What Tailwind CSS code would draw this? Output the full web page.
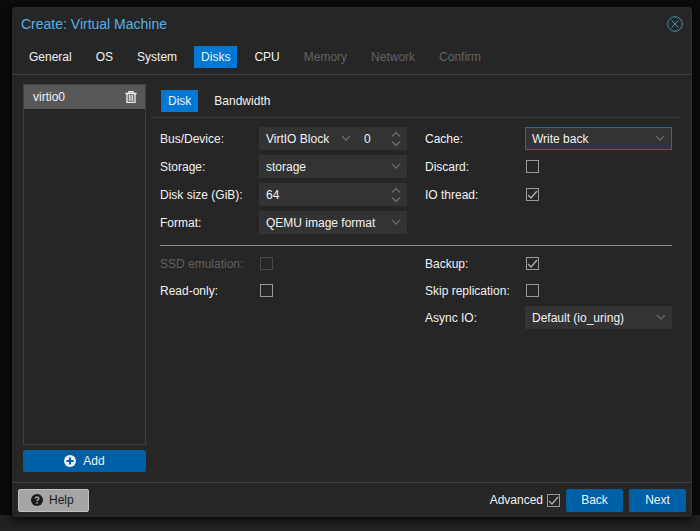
<!DOCTYPE html>
<html lang="en">
<head>
    <meta charset="UTF-8">
    <meta name="viewport" content="width=device-width, initial-scale=1.0">
    <title>Create: Virtual Machine</title>
    <script src="https://cdn.jsdelivr.net/npm/@tailwindcss/browser@4"></script>
</head>
<body class="flex flex-col min-h-screen bg-[#0b0b0b] bg-[linear-gradient(to_top,#222_16px,#0b0b0b_16px)] pt-[7px] pl-3 pr-2 pb-[14px] font-['Liberation_Sans',Arial,sans-serif] text-xs text-[#f2f2f2]">
    <!-- Shared icons -->
    <svg class="hidden">
        <symbol id="chevron" viewBox="0 0 10 6"><path d="M1 1l4 4 4-4" fill="none" stroke="currentColor" stroke-width="1.3"/></symbol>
        <symbol id="spin" viewBox="0 0 10 16"><path d="M1 5.500l4-4 4 4M1 10.500l4 4 4-4" fill="none" stroke="currentColor" stroke-width="1.3"/></symbol>
        <symbol id="check" viewBox="0 0 13 13"><path d="M2 7l3 3 6-7" fill="none" stroke="currentColor" stroke-width="1.3"/></symbol>
    </svg>

    <div class="flex flex-col flex-1 bg-[#262626] rounded-sm border-r border-[#303030] shadow-[0_2px_10px_#000]">
        <!-- Title bar -->
        <header class="flex items-center justify-between h-[34px] pl-[9px] pr-2">
            <h1 class="text-sm text-[#55b0e8]">Create: Virtual Machine</h1>
            <button aria-label="Close" class="text-[#3892b8]">
                <svg class="size-4" viewBox="0 0 16 16" fill="none" stroke="currentColor"><circle cx="8" cy="8" r="7.3"/><path d="M4.500 4.500l7 7M11.500 4.500l-7 7"/></svg>
            </button>
        </header>

        <!-- Wizard steps -->
        <nav class="flex items-center gap-[10px] h-[34px] pl-[10px] pb-px border-b border-[#404040]">
            <button class="h-[22px] px-[7px]">General</button>
            <button class="h-[22px] px-[7px]">OS</button>
            <button class="h-[22px] px-[7px]">System</button>
            <button class="h-[22px] px-[7px] bg-[#0078d4]">Disks</button>
            <button class="h-[22px] px-[7px]">CPU</button>
            <button class="h-[22px] px-[7px] text-[#626262]" disabled>Memory</button>
            <button class="h-[22px] px-[7px] text-[#626262]" disabled>Network</button>
            <button class="h-[22px] px-[7px] text-[#626262]" disabled>Confirm</button>
        </nav>

        <main class="flex flex-1 gap-1 pt-[9px] pr-[9px] pb-[10px] pl-[11px]">
            <!-- Disk list -->
            <aside class="flex flex-col gap-[5px] w-[123px]">
                <ul class="flex-1 border border-[#404040]">
                    <li class="flex items-center justify-between h-6 pl-[9px] pr-2 bg-[#585858]">
                        virtio0
                        <button aria-label="Remove virtio0">
                            <svg class="size-3" viewBox="0 0 12 12"><path d="M.5 2.500h11M4 2.500V.7h4v1.800M2 3v8.400h8V3" fill="none" stroke="currentColor" stroke-width="1.300"/><path d="M4.300 4v6M6 4v6M7.700 4v6" stroke="currentColor"/></svg>
                        </button>
                    </li>
                </ul>
                <button class="flex items-center justify-center gap-[7px] h-[22px] rounded-xs bg-[#0060a6]">
                    <svg class="size-3" viewBox="0 0 12 12"><circle cx="6" cy="6" r="6" fill="currentColor"/><path d="M6 2.500v7M2.500 6h7" stroke="#0060a6" stroke-width="2"/></svg>
                    Add
                </button>
            </aside>

            <section class="flex-1">
                <div class="flex items-start gap-[9px] h-[34px] pt-[6px] pl-[11px] border-b border-[#383838]">
                    <button class="h-[22px] px-[7px] bg-[#0078d4]">Disk</button>
                    <button class="h-[22px] px-[7px]">Bandwidth</button>
                </div>

                <form class="pt-[9px] px-[10px]">
                    <div class="grid grid-cols-2 gap-x-[18px]">
                        <div class="flex flex-col gap-[5px]">
                            <div class="flex items-center h-[23px]">
                                <label for="bus" class="w-[99px] shrink-0">Bus/Device:</label>
                                <div class="flex flex-1 min-w-0 items-center bg-[#333] h-full">
                                    <div class="relative w-[98px]">
                                        <select id="bus" class="appearance-none block w-[71px] h-[23px] pl-[7px] overflow-hidden text-clip outline-none"><option>VirtIO Block</option></select>
                                        <svg class="absolute right-[6px] top-2 w-[10px] h-[6px] text-[#6a6a6a] pointer-events-none"><use href="#chevron"/></svg>
                                    </div>
                                    <input type="text" aria-label="Device" value="0" class="flex-1 min-w-0 h-full pl-[7px] outline-none">
                                    <svg class="w-[10px] h-4 mr-[6px] text-[#6a6a6a]"><use href="#spin"/></svg>
                                </div>
                            </div>
                            <div class="flex items-center h-[23px]">
                                <label for="storage" class="w-[99px] shrink-0">Storage:</label>
                                <div class="relative flex-1 bg-[#333]">
                                    <select id="storage" class="appearance-none block w-full h-[23px] pl-[7px] outline-none"><option>storage</option></select>
                                    <svg class="absolute right-[6px] top-2 w-[10px] h-[6px] text-[#6a6a6a] pointer-events-none"><use href="#chevron"/></svg>
                                </div>
                            </div>
                            <div class="flex items-center h-[23px]">
                                <label for="size" class="w-[99px] shrink-0">Disk size (GiB):</label>
                                <div class="flex flex-1 min-w-0 items-center bg-[#333] h-full">
                                    <input id="size" type="text" value="64" class="flex-1 min-w-0 h-full pl-[7px] outline-none">
                                    <svg class="w-[10px] h-4 mr-[6px] text-[#6a6a6a]"><use href="#spin"/></svg>
                                </div>
                            </div>
                            <div class="flex items-center h-[23px]">
                                <label for="format" class="w-[99px] shrink-0">Format:</label>
                                <div class="relative flex-1 bg-[#333]">
                                    <select id="format" class="appearance-none block w-full h-[23px] pl-[7px] outline-none"><option>QEMU image format</option></select>
                                    <svg class="absolute right-[6px] top-2 w-[10px] h-[6px] text-[#6a6a6a] pointer-events-none"><use href="#chevron"/></svg>
                                </div>
                            </div>
                        </div>

                        <div class="flex flex-col gap-[5px]">
                            <div class="flex items-center h-[23px]">
                                <label for="cache" class="w-[100px] shrink-0">Cache:</label>
                                <div class="relative flex-1 bg-[#333] border border-[#1b6ca5]">
                                    <select id="cache" class="appearance-none block w-full h-[21px] pl-[6px] outline-none"><option>Write back</option></select>
                                    <svg class="absolute right-[6px] top-[7px] w-[10px] h-[6px] text-[#6a6a6a] pointer-events-none"><use href="#chevron"/></svg>
                                </div>
                            </div>
                            <div class="flex items-center h-[23px]">
                                <label for="discard" class="w-[101px] shrink-0">Discard:</label>
                                <input id="discard" type="checkbox" class="appearance-none size-[13px] border border-[#9a9a9a]">
                            </div>
                            <div class="flex items-center h-[23px]">
                                <label for="iothread" class="w-[101px] shrink-0">IO thread:</label>
                                <div class="relative size-[13px]">
                                    <input id="iothread" type="checkbox" checked class="appearance-none block size-[13px] border border-[#9a9a9a]">
                                    <svg class="absolute inset-0 size-[13px] text-[#b0b0b0] pointer-events-none"><use href="#check"/></svg>
                                </div>
                            </div>
                        </div>
                    </div>

                    <hr class="mt-[11px] mb-[6px] border-[#8c8c8c]">

                    <!-- Advanced options -->
                    <div class="grid grid-cols-2 gap-x-[18px]">
                        <div class="flex flex-col gap-1">
                            <div class="flex items-center h-[23px] text-[#606060]">
                                <label for="ssd" class="w-[100px] shrink-0">SSD emulation:</label>
                                <input id="ssd" type="checkbox" disabled class="appearance-none size-[13px] border border-[#484848]">
                            </div>
                            <div class="flex items-center h-[23px]">
                                <label for="readonly" class="w-[100px] shrink-0">Read-only:</label>
                                <input id="readonly" type="checkbox" class="appearance-none size-[13px] border border-[#9a9a9a]">
                            </div>
                        </div>
                        <div class="flex flex-col gap-1">
                            <div class="flex items-center h-[23px]">
                                <label for="backup" class="w-[101px] shrink-0">Backup:</label>
                                <div class="relative size-[13px]">
                                    <input id="backup" type="checkbox" checked class="appearance-none block size-[13px] border border-[#9a9a9a]">
                                    <svg class="absolute inset-0 size-[13px] text-[#b0b0b0] pointer-events-none"><use href="#check"/></svg>
                                </div>
                            </div>
                            <div class="flex items-center h-[23px]">
                                <label for="skip" class="w-[101px] shrink-0">Skip replication:</label>
                                <input id="skip" type="checkbox" class="appearance-none size-[13px] border border-[#9a9a9a]">
                            </div>
                            <div class="flex items-center h-[23px]">
                                <label for="asyncio" class="w-[100px] shrink-0">Async IO:</label>
                                <div class="relative flex-1 bg-[#333]">
                                    <select id="asyncio" class="appearance-none block w-full h-[23px] pl-[7px] outline-none"><option>Default (io_uring)</option></select>
                                    <svg class="absolute right-[6px] top-2 w-[10px] h-[6px] text-[#6a6a6a] pointer-events-none"><use href="#chevron"/></svg>
                                </div>
                            </div>
                        </div>
                    </div>
                </form>
            </section>
        </main>

        <footer class="flex items-center justify-between h-[35px] pl-[6px] pr-[5px] border-t border-[#404040]">
            <button class="flex items-center gap-[6px] h-[23px] pl-3 pr-[14px] rounded-xs border border-[#c0c0c0] bg-[#a5a5a5] text-[#1a1a1a]">
                <svg class="size-3" viewBox="0 0 12 12"><circle cx="6" cy="6" r="6" fill="currentColor"/><path d="M4.200 4.600c.1-2.200 3.700-2.100 3.600 0C7.800 5.700 6 5.700 6 7.200M6 8.200v1.500" fill="none" stroke="#a5a5a5" stroke-width="1.500"/></svg>
                Help
            </button>
            <div class="flex items-center gap-[6px]">
                <div class="flex items-center gap-1">
                    <label for="advanced">Advanced</label>
                    <div class="relative size-[13px]">
                        <input id="advanced" type="checkbox" checked class="appearance-none block size-[13px] border border-[#9a9a9a]">
                        <svg class="absolute inset-0 size-[13px] text-[#b0b0b0] pointer-events-none"><use href="#check"/></svg>
                    </div>
                </div>
                <button class="w-[57px] h-[23px] rounded-xs bg-[#0060a6]">Back</button>
                <button class="w-[57px] h-[23px] rounded-xs bg-[#0060a6]">Next</button>
            </div>
        </footer>
    </div>
</body>
</html>
